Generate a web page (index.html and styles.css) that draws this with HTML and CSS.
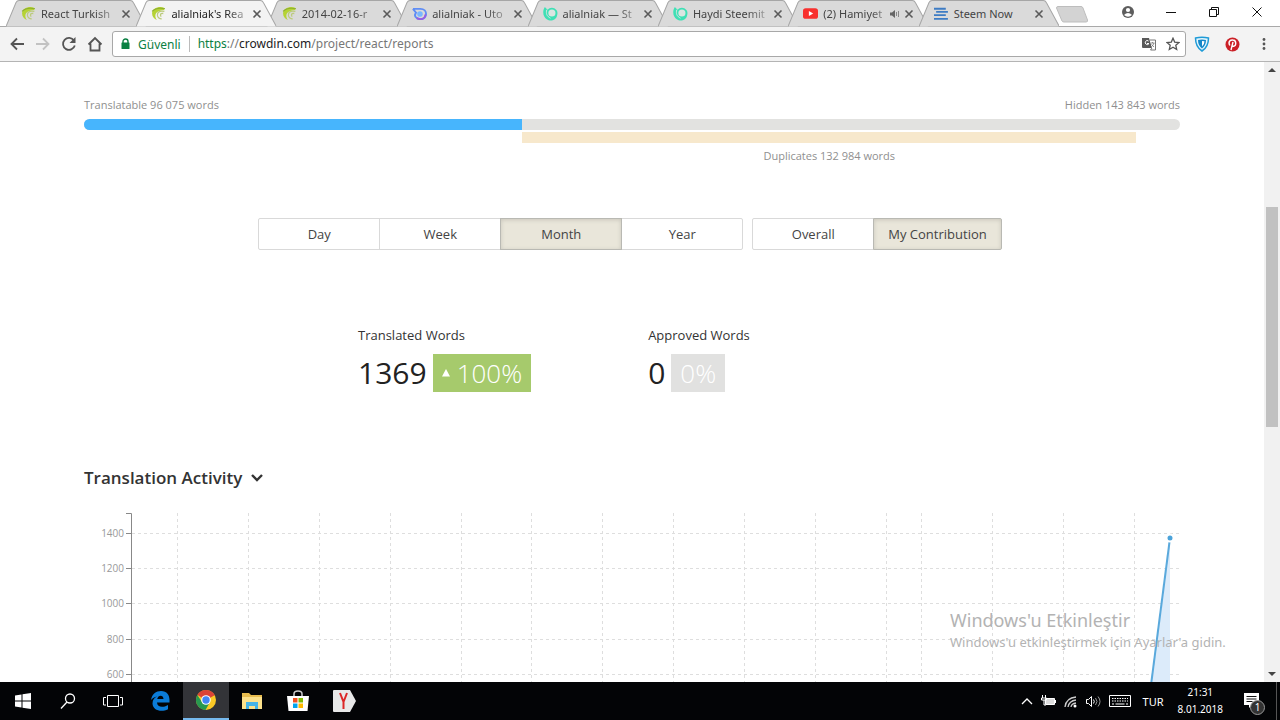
FILE: index.html
```html
<!DOCTYPE html>
<html lang="tr">
<head>
<meta charset="utf-8">
<title>alialniak's Reports</title>
<link rel="stylesheet" href="styles.css">
</head>
<body>
<svg class="defs" aria-hidden="true">
  <symbol id="shape" viewBox="0 0 140 27" preserveAspectRatio="none"><path d="M0 26.5L10 2.500Q11 .5 13 .5H124Q126 .5 127 2.500L140 26.500" stroke="#a6a6a6"/></symbol>
  <symbol id="crowdin" viewBox="0 0 14 14"><path d="M13 2C8-.5 1 2 1 7c0 3 2 5 4.500 6C2.500 9 4 4.500 12 3.800z" fill="#b5d334"/><path d="M12.500 5C8 4 5.500 6 6 9c.5 2 2 3 4 3M11.500 7C9 6.500 8 8 9.500 10" fill="none" stroke="#bccb7c" stroke-width="1.200"/><path d="M1 5C4 2 8 1.500 13 2.500" fill="none" stroke="#8faf2f"/></symbol>
  <symbol id="steem" viewBox="0 0 16 16"><path d="M2 1C-1 5 0 12 4 14c4 3 10 1 11-4 1-3 0-5-1-6-2-3-7-3-9 0-1-1-2-2-3-3z" fill="#3fe0b5"/><circle cx="9.500" cy="7.500" r="3.800" fill="#dbe5e1"/><path d="M4 4c-1 4 0 7 4 9" fill="none" stroke="#dbe5e1"/></symbol>
  <symbol id="x" viewBox="0 0 10 10"><path d="M1.500 1.500l7 7M8.500 1.500l-7 7" stroke="#5a5a5a" stroke-width="1.600"/></symbol>
</svg>

<header class="chrome">
  <div class="strip">
    <nav class="tabs" aria-label="Sekmeler">
      <div class="tab"><svg class="shape"><use href="#shape"/></svg><svg class="fav"><use href="#crowdin"/></svg><span class="name">React Turkish</span><button class="close" aria-label="Kapat"><svg><use href="#x"/></svg></button></div>
      <div class="tab current"><svg class="shape"><use href="#shape"/></svg><svg class="fav"><use href="#crowdin"/></svg><span class="name">alialniak's Rea</span><button class="close" aria-label="Kapat"><svg><use href="#x"/></svg></button></div>
      <div class="tab"><svg class="shape"><use href="#shape"/></svg><svg class="fav"><use href="#crowdin"/></svg><span class="name">2014-02-16-r</span><button class="close" aria-label="Kapat"><svg><use href="#x"/></svg></button></div>
      <div class="tab"><svg class="shape"><use href="#shape"/></svg><svg class="fav" viewBox="0 0 16 14"><path d="M1 2h8c8 0 8 11 0 11-5 0-7-4-5-6M1 2l4 5" fill="none" stroke="#5f8df5" stroke-width="2"/><path d="M5 12c4 2 9 1 9.500-4" fill="none" stroke="#9a5de0" stroke-width="2"/><circle cx="8.500" cy="7.500" r="3" fill="#79b7ff"/></svg><span class="name">alialniak - Uto</span><button class="close" aria-label="Kapat"><svg><use href="#x"/></svg></button></div>
      <div class="tab"><svg class="shape"><use href="#shape"/></svg><svg class="fav"><use href="#steem"/></svg><span class="name">alialniak — St</span><button class="close" aria-label="Kapat"><svg><use href="#x"/></svg></button></div>
      <div class="tab"><svg class="shape"><use href="#shape"/></svg><svg class="fav"><use href="#steem"/></svg><span class="name">Haydi Steemit</span><button class="close" aria-label="Kapat"><svg><use href="#x"/></svg></button></div>
      <div class="tab"><svg class="shape"><use href="#shape"/></svg><svg class="fav" viewBox="0 0 14 14"><rect y="2" width="14" height="10" rx="2.500" fill="#f8302e"/><path d="M5.500 4.700v4.600L9.500 7z" fill="#fff"/></svg><span class="name">(2) Hamiyet</span><svg class="sound" viewBox="0 0 10 10"><path d="M0 3.500h2L5 1v8L2 6.500H0z" fill="#666"/><path d="M6.500 3v4M8.500 2v6" stroke="#888"/></svg><button class="close" aria-label="Kapat"><svg><use href="#x"/></svg></button></div>
      <div class="tab"><svg class="shape"><use href="#shape"/></svg><svg class="fav" viewBox="0 0 14 14"><path d="M0 2.500h11M2 5.500h11M0 8.500h11M0 12h13" stroke="#3e7cc4" stroke-width="1.800"/></svg><span class="name">Steem Now</span><button class="close" aria-label="Kapat"><svg><use href="#x"/></svg></button></div>
    </nav>
    <button class="newtab" aria-label="Yeni sekme"><svg width="32" height="17" viewBox="0 0 32 17"><path d="M2 .5H25Q26.500 .5 27 2L31.500 14Q32 16 30 16H8Q6.500 16 6 15L.5 2Q.5 .5 2 .5z" fill="#d3d3d3" stroke="#bdbdbd"/></svg></button>
    <div class="window">
      <button aria-label="Profil"><svg width="14" height="14" viewBox="0 0 14 14"><circle cx="7" cy="7" r="6" fill="#5d5d5d"/><circle cx="7" cy="5" r="2.100" fill="#fff"/><path d="M3 10q4-4 8 0-4 3.500-8 0z" fill="#fff"/></svg></button>
      <button aria-label="Simge durumu"><svg width="12" height="12" viewBox="0 0 12 12"><path d="M1 6.500h10" stroke="#111"/></svg></button>
      <button aria-label="Önceki boyut"><svg width="12" height="12" viewBox="0 0 12 12"><path d="M1.500 3.500h7v7h-7zM3.500 3.500v-2h7v7h-2" fill="none" stroke="#111"/></svg></button>
      <button aria-label="Kapat"><svg width="12" height="12" viewBox="0 0 12 12"><path d="M1.500 1.500l9 9M10.500 1.500l-9 9" stroke="#111"/></svg></button>
    </div>
  </div>
  <div class="toolbar">
    <button class="nav" aria-label="Geri"><svg viewBox="0 0 16 16"><path d="M15 8H3M8 2.500L2.500 8 8 13.500" class="ink"/></svg></button>
    <button class="nav off" aria-label="İleri"><svg viewBox="0 0 16 16"><path d="M1 8h12M8 2.500L13.500 8 8 13.500" class="ink"/></svg></button>
    <button class="nav" aria-label="Yenile"><svg viewBox="0 0 16 16"><path d="M13 4.500A6 6 0 1 0 13.800 9.500" class="ink"/><path d="M14.500 1v6h-6z" fill="#555"/></svg></button>
    <button class="nav" aria-label="Ana sayfa"><svg viewBox="0 0 16 16"><path d="M1.500 8.500L8 2l6.500 6.500M3.500 7.500v7h9v-7" class="ink"/></svg></button>
    <div class="address">
      <svg width="9" height="12" viewBox="0 0 9 12"><path d="M2 5V3.500a2.500 2.500 0 0 1 5 0V5" fill="none" stroke="#0b8043" stroke-width="1.400"/><rect x=".5" y="4.500" width="8" height="6.500" rx=".5" fill="#0b8043"/></svg>
      <span class="secure">Güvenli</span>
      <span class="url"><span class="green">https</span>://<b>crowdin.com</b>/project/react/reports</span>
      <button aria-label="Çevir"><svg width="14" height="14" viewBox="0 0 14 14"><path d="M0 1h7l3 10H1Q0 11 0 10z" fill="#5a5a5a"/><path d="M6.500 4A2 2 0 1 0 7 6.500H5" fill="none" stroke="#fff"/><path d="M8 3h5.500v10H8.500l1.500-2" fill="#fff" stroke="#777"/><path d="M8.500 6h4M10.500 5v1M12 6q-1 3-3 4M9.500 7.500l2.500 2.500" fill="none" stroke="#777" stroke-width=".8"/></svg></button>
      <button aria-label="Yer işareti"><svg width="14" height="14" viewBox="0 0 14 14"><path d="M7 1.200l1.700 3.900 4.300.4-3.200 2.800.9 4.200L7 10.300l-3.700 2.200.9-4.200L1 5.500l4.300-.4z" fill="none" stroke="#555" stroke-width="1.300"/></svg></button>
    </div>
    <button class="ext" aria-label="VPN"><svg width="16" height="16" viewBox="0 0 16 16"><path d="M1.500 2Q8 .5 14.500 2 14.500 11 8 15 1.500 11 1.500 2z" fill="#e5f6fd" stroke="#1f9bd7" stroke-width="1.500"/><path d="M4 4q4-1 8 0 0 5.500-4 8.500Q4 9.500 4 4z" fill="#1688c9"/><path d="M8 5l2.500.2q0 3.300-2.500 5.300z" fill="#fff"/></svg></button>
    <button class="ext" aria-label="Pinterest"><svg width="15" height="15" viewBox="0 0 15 15"><circle cx="7.500" cy="7.500" r="7" fill="#cb2027"/><path d="M4.800 8.500C2.500 4 6 2.800 7.800 3c4 .2 3.600 6 .8 6.300-1 0-1.500-.8-1.500-.8M8 5l-2 8" fill="none" stroke="#fff" stroke-width="1.400"/></svg></button>
    <button class="ext" aria-label="Menü"><svg width="4" height="14" viewBox="0 0 4 14"><circle cx="2" cy="2.500" r="1.400" fill="#555"/><circle cx="2" cy="7" r="1.400" fill="#555"/><circle cx="2" cy="11.500" r="1.400" fill="#555"/></svg></button>
  </div>
</header>

<div class="viewport">
  <main class="page">
    <section class="words">
      <div class="ends"><span>Translatable 96 075 words</span><span>Hidden 143 843 words</span></div>
      <div class="bar"><div class="fill" style="width:40%"></div></div>
      <div class="dup" style="margin-left:40%;width:56%"><div class="dupbar"></div><span>Duplicates 132 984 words</span></div>
    </section>
    <div class="filters">
      <div class="group"><button>Day</button><button>Week</button><button class="on">Month</button><button>Year</button></div>
      <div class="group"><button>Overall</button><button class="on">My Contribution</button></div>
    </div>
    <section class="stats">
      <div class="stat"><span>Translated Words</span><div class="value"><span>1369</span><span class="badge up"><svg width="8" height="8" viewBox="0 0 8 8"><path d="M4 0l4 7.500H0z" fill="#fff"/></svg>100%</span></div></div>
      <div class="stat"><span>Approved Words</span><div class="value"><span>0</span><span class="badge">0%</span></div></div>
    </section>
    <h2>Translation Activity <svg width="14" height="10" viewBox="0 0 14 10"><path d="M2 2l5 5 5-5" fill="none" stroke="#333" stroke-width="2.400"/></svg></h2>
    <svg class="chart" viewBox="0 0 1096 180">
      <path class="grid" d="M48 28.500H1096M48 63.500H1096M48 98.500H1096M48 134.500H1096M48 169.500H1096M93.500 8V180M164.500 8V180M235.500 8V180M306.500 8V180M377.500 8V180M447.500 8V180M518.500 8V180M589.500 8V180M660.500 8V180M731.500 8V180M802.500 8V180M837.500 8V180M908.500 8V180M979.500 8V180M1050.500 8V180"/>
      <path class="axis" d="M42 8.500h5.500V180M42 28.500h5.500M42 63.500h5.500M42 98.500h5.500M42 134.500h5.500M42 169.500h5.500"/>
      <g class="ticks"><text x="40" y="32">1400</text><text x="40" y="67">1200</text><text x="40" y="102">1000</text><text x="40" y="138">800</text><text x="40" y="173">600</text></g>
      <path d="M1086 33V180H1067z" fill="#dcebfa"/>
      <path d="M1086 33L1067 180" stroke="#5aa9dc" stroke-width="2"/>
      <circle cx="1086" cy="33" r="3.500" fill="#4ba3da" stroke="#fff" stroke-width="2"/>
    </svg>
    <div class="watermark"><p class="large">Windows'u Etkinleştir</p><p>Windows'u etkinleştirmek için Ayarlar'a gidin.</p></div>
  </main>
  <div class="scroll" aria-hidden="true"><svg viewBox="0 0 16 16"><path d="M8 6l4 4H4z" fill="#444"/></svg><div class="track"><div class="thumb"></div></div><svg viewBox="0 0 16 16"><path d="M8 10l4-4H4z" fill="#444"/></svg></div>
</div>

<footer class="taskbar">
  <button aria-label="Başlat"><svg width="16" height="16" viewBox="0 0 16 16"><path d="M0 2.500l6.500-1V7.500H0zM7.500 1.300L16 0v7.500H7.500zM0 8.500h6.500v6l-6.500-1zM7.500 8.500H16V16l-8.500-1.300z" fill="#fff"/></svg></button>
  <button aria-label="Ara"><svg width="16" height="16" viewBox="0 0 16 16"><circle cx="10" cy="5.500" r="4.500" fill="none" stroke="#fff" stroke-width="1.300"/><path d="M7 9l-6 6.500" stroke="#fff" stroke-width="1.300"/></svg></button>
  <button aria-label="Görev görünümü"><svg width="20" height="14" viewBox="0 0 20 14"><path d="M4.500 1.500h11v11h-11zM3 3.500H.5v7.500H3M17 3.500h2.500v7.500H17" fill="none" stroke="#fff"/></svg></button>
  <div class="apps">
    <button aria-label="Edge"><svg width="20" height="20" viewBox="0 0 20 20"><path d="M1 9C2 3 6 0 11 0c6 0 8.500 4 8.500 9v2.500H7c.3 5 6 5.500 11 2.500v4.200C11 22 2.500 19 2.500 12.500 2.500 9 4.500 6.500 7 5.500 4.500 6 2.500 7 1 9zM7.200 8h6.300C13.500 3.500 8 3.500 7.200 8z" fill="#0b7cd8"/></svg></button>
    <button class="active" aria-label="Chrome"><svg width="20" height="20" viewBox="0 0 20 20"><circle cx="10" cy="10" r="10" fill="#fbc926"/><path d="M10 10L1.340 5A10 10 0 0 1 18.660 5z" fill="#db4437"/><path d="M18.660 5H10v5z" fill="#db4437"/><path d="M1.340 5A10 10 0 0 0 9.500 20L14 12H6z" fill="#27984f"/><circle cx="10" cy="10" r="4.800" fill="#fff"/><circle cx="10" cy="10" r="3.700" fill="#4285f4"/></svg></button>
    <button aria-label="Dosya Gezgini"><svg width="20" height="18" viewBox="0 0 20 18"><path d="M0 1h7l2 2h11v14H0z" fill="#e8bd4f"/><path d="M1 5h19v12H0V5z" fill="#fce18b"/><path d="M4 10h12v7h-3v-3H7v3H4z" fill="#45b3e6"/></svg></button>
    <button aria-label="Mağaza"><svg width="22" height="22" viewBox="0 0 22 22"><path d="M7 6V4q0-3 4-3t4 3v2" fill="none" stroke="#ccc" stroke-width="1.500"/><path d="M0 6h22l-1.500 15h-19z" fill="#fff"/><path d="M6 8h4.500v4.500H6z" fill="#f15022"/><path d="M11.500 8H16v4.500h-4.500z" fill="#7fba00"/><path d="M6 13.500h4.500V18H6z" fill="#00a4ef"/><path d="M11.500 13.500H16V18h-4.500z" fill="#ffb900"/></svg></button>
    <button aria-label="Yandex"><svg width="23" height="22" viewBox="0 0 23 22"><path d="M1 0h16l6 11-6 11H1Q0 22 0 21V1Q0 0 1 0z" fill="#e8e8e8"/><path d="M7 3l3.500 9v7M14 3l-3.500 9" fill="none" stroke="#dc2727" stroke-width="2"/></svg></button>
  </div>
  <div class="tray">
    <svg width="12" height="8" viewBox="0 0 12 8"><path d="M1 7l5-5 5 5" fill="none" stroke="#fff" stroke-width="1.300"/></svg>
    <svg width="15" height="12" viewBox="0 0 15 12"><path d="M4.500 3.500h9v6h-9z" fill="#ddd" stroke="#fff"/><path d="M14.500 5v3M1.500 0v3M4.500 0v3M.5 3h5v2h-5zM3 5v5h2" fill="none" stroke="#fff"/></svg>
    <svg width="14" height="13" viewBox="0 0 14 13"><path d="M1 12Q2 3 12 2M4 12Q5 6 12 5M7 12q.5-3.500 5-4" fill="none" stroke="#ccc" stroke-width="1.300"/><circle cx="11" cy="11" r="1.500" fill="#fff"/></svg>
    <svg width="15" height="13" viewBox="0 0 15 13"><path d="M.5 4.500h2l3-3v10l-3-3h-2z" fill="none" stroke="#fff"/><path d="M7.500 4.500q1.500 2 0 4" fill="none" stroke="#fff"/><path d="M9.500 3q3 3.500 0 7M12 1.500q4 5 0 10" fill="none" stroke="#999"/></svg>
    <svg width="22" height="14" viewBox="0 0 22 14"><path d="M.5 1.500h21v11H.5z" fill="none" stroke="#fff"/><path d="M3 4.500h16M3 7h16" stroke="#fff" stroke-dasharray="1.500 1"/><path d="M3 10h2M6.500 10h9M17 10h2" stroke="#fff"/></svg>
    <span class="lang">TUR</span>
    <div class="clock"><span>21:31</span><span>8.01.2018</span></div>
    <button class="notes" aria-label="Bildirimler"><svg width="16" height="16" viewBox="0 0 16 16"><path d="M0 0h15v12H8l-3 3v-3H0z" fill="#fff"/><path d="M2.500 3.500h10M2.500 6h10M2.500 8.500h6" stroke="#111"/></svg><span class="count">1</span></button>
  </div>
</footer>
</body>
</html>
```

FILE: styles.css
```css
* { box-sizing: border-box; }
body { margin: 0; height: 100vh; display: flex; flex-direction: column; overflow: hidden; font-family: "Open Sans", "Noto Sans", sans-serif; color: #333; background: #fff; }
button { font: inherit; color: inherit; background: none; border: 0; padding: 0; display: flex; align-items: center; justify-content: center; }
svg { display: block; flex: none; }
.defs { position: absolute; width: 0; height: 0; }

.chrome { flex: none; font-family: "Noto Sans", "Open Sans", sans-serif; }
.strip { display: flex; height: 27px; background: #fff; border-bottom: 1px solid #a9a9a9; }
.tabs { flex: 0 1 1053px; display: flex; margin-left: 6px; height: 27px; min-width: 0; }
.tab { position: relative; flex: 1; min-width: 0; display: flex; align-items: center; margin-right: -10px; padding: 0 15px; font-size: 11px; color: #444; }
.tab:last-child { margin-right: 0; }
.shape { position: absolute; inset: 0; width: 100%; height: 27px; fill: #dadada; }
.current { z-index: 1; color: #222; }
.current .shape { fill: #f3f3f3; }
.fav { position: relative; width: 15px; height: 15px; margin-right: 5px; }
.name { position: relative; flex: 1; min-width: 0; white-space: nowrap; line-height: 18px; mask-image: linear-gradient(to right, #000 75%, transparent 115%); }
.tab:last-child .name { mask-image: none; }
.sound { position: relative; width: 10px; height: 10px; margin: 0 -4px 0 4px; }
.close { position: relative; margin-left: 8px; }
.close svg { width: 10px; height: 10px; }
.newtab { margin: 0 auto 0 -3px; padding-top: 3px; }
.window { display: flex; margin-right: 2px; }
.window button { width: 43px; padding-bottom: 2px; }

.toolbar { display: flex; align-items: center; height: 35px; padding: 0 12px 0 4px; background: #f3f3f3; border-bottom: 1px solid #b4b4b4; }
.nav { width: 26px; height: 28px; }
.nav svg { width: 16px; height: 16px; }
.ink { fill: none; stroke: #555; stroke-width: 1.800px; }
.off { opacity: .3; }
.address { flex: 1; display: flex; align-items: center; height: 26px; margin: 0 8px 0 4px; padding: 0 5px 0 8px; background: #fff; border: 1px solid #a8a8a8; border-radius: 3px; font-size: 12px; }
.secure { color: #0b8043; margin: 0 8px; }
.green { color: #0b8043; }
.url { flex: 1; border-left: 1px solid #bbb; padding-left: 8px; line-height: 16px; color: #777; white-space: nowrap; }
.url b { font-weight: 400; color: #222; }
.address button { margin-left: 10px; }
.ext { min-width: 16px; margin-right: 14px; }
.ext:last-child { margin: 0 0 0 6px; min-width: 8px; }

.viewport { flex: 1; min-height: 0; display: flex; }
.page { position: relative; flex: 1; min-width: 0; overflow: hidden; padding: 34px 84px 0; }
.words { font-size: 11px; line-height: 18px; color: #8f8f8f; }
.ends { display: flex; justify-content: space-between; }
.bar { height: 11px; margin-top: 5px; background: #e2e2e0; border-radius: 6px; overflow: hidden; }
.fill { height: 100%; background: #47b5fd; }
.dup { text-align: center; margin-top: 2px; }
.dupbar { height: 11px; margin-bottom: 4px; background: #f7e8cc; }
.dup span { display: block; }
.filters { display: flex; justify-content: center; gap: 9px; margin-top: 53px; padding-right: 4px; }
.group { display: flex; }
.group button { min-width: 122px; height: 32px; margin-left: -1px; padding: 0 14px; border: 1px solid #d9d9d9; background: #fff; font-size: 13px; color: #444; }
.group button:first-child { margin-left: 0; border-radius: 2px 0 0 2px; }
.group button:last-child { border-radius: 0 2px 2px 0; }
.group .on { position: relative; background: #e9e6da; border-color: #b9b9b3; box-shadow: inset 0 1px 4px #c9c6bb; }
.stats { display: flex; gap: 117px; margin: 74px 0 0 25%; font-size: 13px; line-height: 22px; }
.value { display: flex; align-items: center; gap: 6px; margin-top: 8px; font-size: 30px; line-height: 38px; color: #222; }
.badge { display: flex; align-items: center; gap: 7px; height: 38px; padding: 0 9px; background: #e1e1e0; color: #fff; font-size: 26px; font-weight: 300; }
.up { background: #a6ca6c; }
h2 { display: flex; align-items: center; gap: 8px; margin: 74px 0 15px; font-size: 17px; line-height: 24px; font-weight: 600; }
.chart { width: 100%; }
.grid { fill: none; stroke: #dedede; stroke-dasharray: 3 3; }
.axis { fill: none; stroke: #888; }
.ticks { font-size: 10px; fill: #999; text-anchor: end; }
.watermark { position: absolute; right: 34px; bottom: 30px; min-width: 280px; color: #b3b3b3; font-family: "Noto Sans", sans-serif; font-size: 13px; line-height: 20px; }
.watermark p { margin: 0; }
.watermark .large { font-size: 18px; line-height: 24px; }
.scroll { width: 16px; display: flex; flex-direction: column; background: #f1f1f1; }
.scroll svg { width: 16px; height: 16px; }
.track { flex: 1; padding: 129px 2px 0; }
.thumb { height: 220px; background: #c1c1c1; }

.taskbar { flex: none; display: flex; height: 38px; background: #030406; color: #fff; font-family: "Noto Sans", sans-serif; }
.taskbar > button { width: 45px; }
.apps { display: flex; margin-left: 2px; }
.apps button { width: 46px; }
.apps .active { background: #333438; border-bottom: 2px solid #76b9ed; }
.tray { margin-left: auto; display: flex; align-items: center; gap: 8px; padding-right: 3px; font-size: 11px; }
.lang { margin: 0 6px 0 4px; }
.clock { display: flex; flex-direction: column; align-items: center; font-size: 10px; line-height: 17px; }
.notes { position: relative; width: 50px; height: 38px; margin-left: -4px; border-right: 1px solid #555; }
.count { position: absolute; left: 23px; top: 18px; width: 15px; height: 15px; border-radius: 50%; border: 1px solid #999; background: #333; font-size: 10px; line-height: 13px; }
```
